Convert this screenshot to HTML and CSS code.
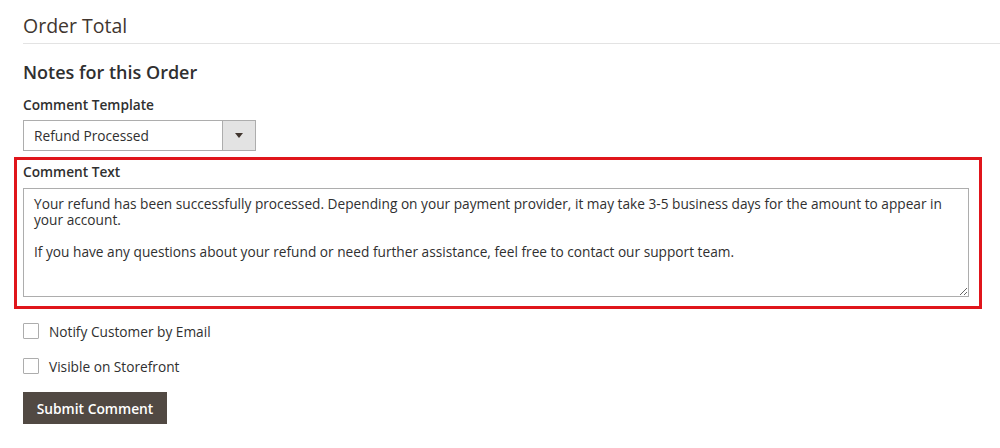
FILE: index.html
```html
<!DOCTYPE html>
<html lang="en">
<head>
<meta charset="utf-8">
<title>Order Notes</title>
<link rel="stylesheet" href="styles.css">
</head>
<body>
<div class="page">
  <h2 class="section-title">Order Total</h2>
  <h3 class="notes-title">Notes for this Order</h3>
  <div class="field-label">Comment Template</div>
  <div class="select">
    <span class="select-value">Refund Processed</span>
    <span class="select-btn"><span class="arrow"></span></span>
  </div>
  <div class="highlight">
    <div class="field-label">Comment Text</div>
    <textarea class="comment" rows="5">Your refund has been successfully processed. Depending on your payment provider, it may take 3-5 business days for the amount to appear in your account.

If you have any questions about your refund or need further assistance, feel free to contact our support team.</textarea>
  </div>
  <label class="check-row first"><span class="checkbox"></span><span>Notify Customer by Email</span></label>
  <label class="check-row"><span class="checkbox"></span><span>Visible on Storefront</span></label>
  <button class="submit" type="button">Submit Comment</button>
</div>
</body>
</html>
```

FILE: styles.css
```css
html, body {
  margin: 0;
  padding: 0;
  background: #fff;
}
body {
  font-family: "Open Sans", "DejaVu Sans", sans-serif;
  color: #303030;
}
.page {
  padding: 12px 0 0 23px;
}
.section-title {
  margin: 0;
  font-size: 19.5px;
  font-weight: 400;
  line-height: 28px;
  color: #41362f;
  padding-bottom: 3px;
  border-bottom: 1px solid #e3e3e3;
}
.notes-title {
  margin: 16px 0 0;
  font-size: 18px;
  font-weight: 600;
  line-height: 24px;
  color: #303030;
}
.field-label {
  margin-top: 11px;
  font-size: 13.7px;
  font-weight: 600;
  line-height: 20px;
  color: #303030;
}
.select {
  margin-top: 5px;
  width: 233px;
  height: 31px;
  box-sizing: border-box;
  border: 1px solid #adadad;
  display: flex;
  align-items: stretch;
  background: #fff;
}
.select-value {
  flex: 1;
  padding-left: 10px;
  font-size: 13.7px;
  line-height: 29px;
  color: #303030;
}
.select-btn {
  width: 32px;
  background: #e3e3e3;
  border-left: 1px solid #adadad;
  display: flex;
  align-items: center;
  justify-content: center;
}
.arrow {
  width: 0;
  height: 0;
  border-left: 4px solid transparent;
  border-right: 4px solid transparent;
  border-top: 5px solid #41362f;
}
.highlight {
  margin: 6px 0 0 -9px;
  width: 968px;
  box-sizing: border-box;
  border: 3px solid #e0151b;
  padding: 0 10px 9px 6px;
}
.highlight .field-label {
  margin-top: 2px;
}
.comment {
  display: block;
  margin-top: 6px;
  width: 946px;
  height: 109px;
  box-sizing: border-box;
  border: 1px solid #adadad;
  border-radius: 0;
  padding: 7px 10px 6px;
  font-family: "Open Sans", "DejaVu Sans", sans-serif;
  font-size: 13.7px;
  line-height: 16px;
  color: #303030;
  resize: vertical;
  outline: none;
}
.check-row {
  display: flex;
  align-items: center;
  gap: 10px;
  height: 16px;
  margin-top: 19px;
  font-size: 13.7px;
  color: #303030;
}
.check-row.first {
  margin-top: 14px;
}
.checkbox {
  width: 16px;
  height: 16px;
  box-sizing: border-box;
  border: 1px solid #adadad;
  border-radius: 1px;
  background: #fff;
}
.submit {
  display: block;
  margin-top: 18px;
  width: 144px;
  height: 32px;
  padding: 0;
  border: 1px solid #514943;
  background: #514943;
  color: #fff;
  font-family: "Open Sans", "DejaVu Sans", sans-serif;
  font-size: 13.8px;
  font-weight: 600;
}
```
